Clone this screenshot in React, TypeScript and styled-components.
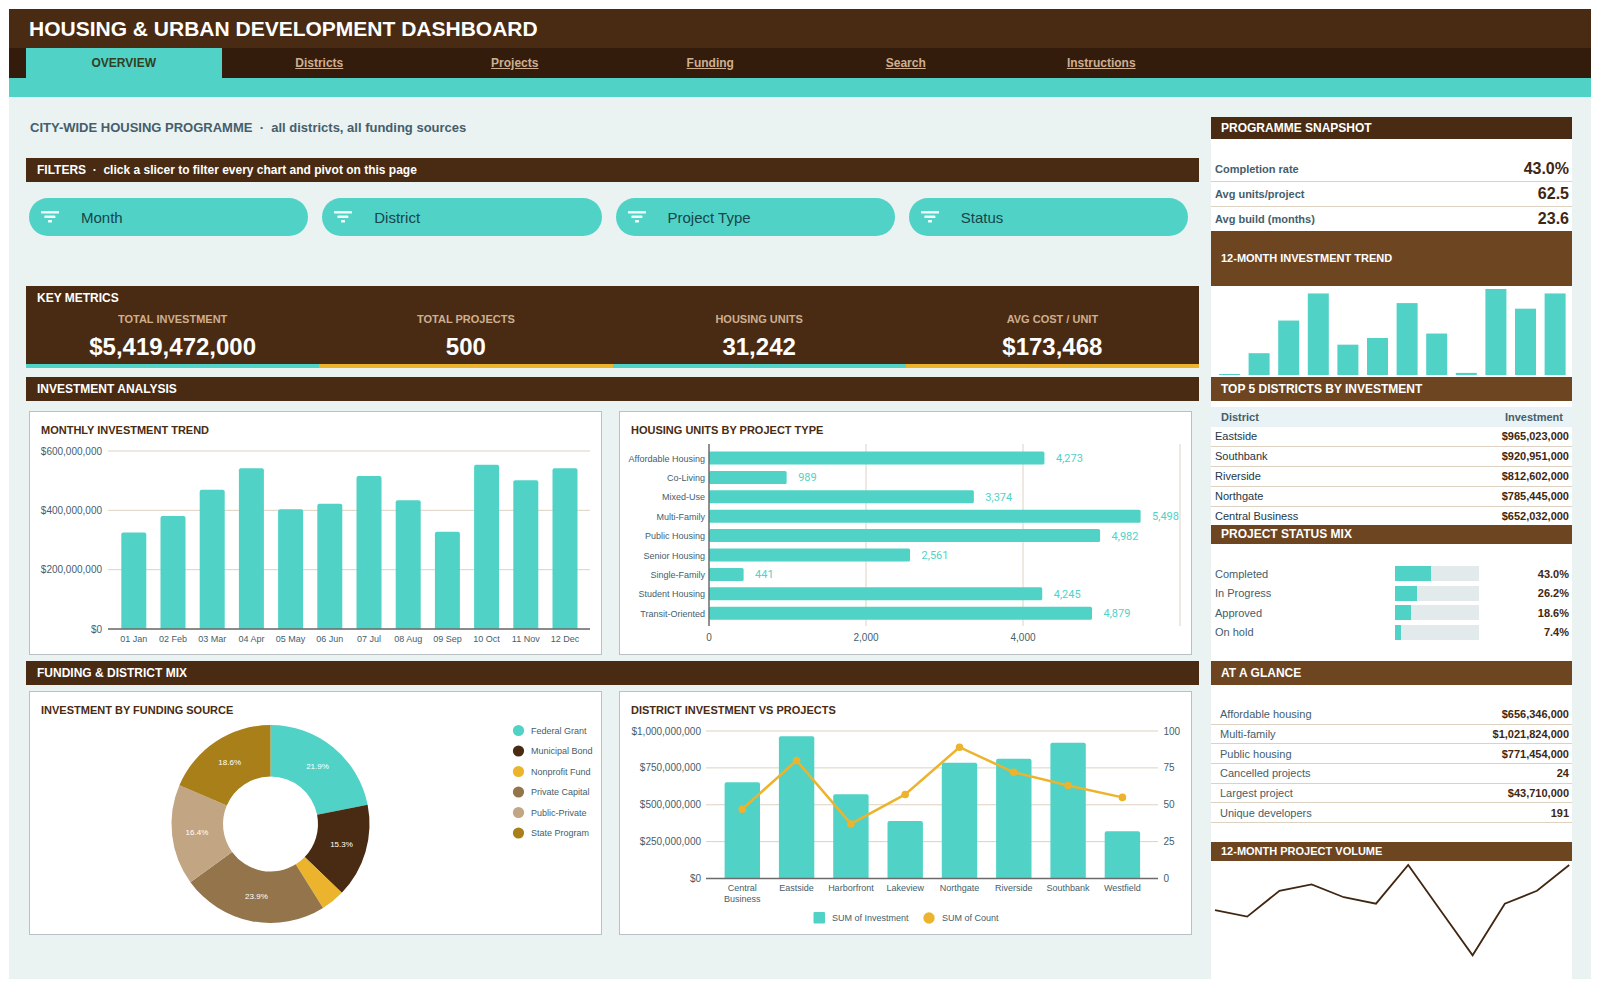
import styled, { createGlobalStyle } from 'styled-components';

const colors = {
  brown: '#482b12',
  darkBrown: '#331c0b',
  midBrown: '#6d4521',
  teal: '#50d2c6',
  gold: '#ecb32d',
  tan: '#cfae90',
  slate: '#455e6b',
  ink: '#233746',
  surface: '#ebf2f2',
  grid: '#ddd2c2',
  axis: '#6b6b6b',
};

const GlobalStyle = createGlobalStyle`
  * {
    box-sizing: border-box;
  }

  body {
    margin: 0;
    background: #ffffff;
    color: ${colors.brown};
    font-family: 'Liberation Sans', Arial, sans-serif;
    font-size: 11px;
  }
`;

const Page = styled.div`
  display: flex;
  flex-direction: column;
  min-height: 100vh;
  padding: 9px;
`;

const Header = styled.header`
  background: ${colors.brown};
`;

const PageTitle = styled.h1`
  margin: 0;
  padding: 0 20px;
  color: #ffffff;
  font-size: 21px;
  font-weight: 700;
  line-height: 39px;
`;

const Nav = styled.nav`
  display: grid;
  grid-template-columns: repeat(6, 1fr);
  padding: 0 392px 0 17px;
  background: ${colors.darkBrown};
`;

const NavLink = styled.a<{ $active?: boolean }>`
  background: ${({ $active }) => ($active ? colors.teal : 'transparent')};
  color: ${({ $active }) => ($active ? '#31401f' : colors.tan)};
  font-size: 12px;
  font-weight: 700;
  line-height: 30px;
  text-align: center;
  text-decoration: ${({ $active }) => ($active ? 'none' : 'underline')};
`;

const Stripe = styled.div`
  height: 19px;
  background: ${colors.teal};
`;

const Body = styled.div`
  display: grid;
  flex: 1;
  grid-template-columns: minmax(0, 1fr) 361px;
  gap: 12px;
  padding: 20px 19px 0 17px;
  background: ${colors.surface};
`;

const Main = styled.main`
  padding-bottom: 38px;
`;

const Subtitle = styled.p`
  margin: 0 0 19px;
  padding-left: 4px;
  color: ${colors.slate};
  font-size: 13px;
  font-weight: 700;
  line-height: 22px;
  white-space: pre;
`;

const SectionBar = styled.h2`
  margin: 0;
  padding: 0 11px;
  background: ${colors.brown};
  color: #ffffff;
  font-size: 12px;
  font-weight: 700;
  line-height: 24px;
  white-space: pre;
`;

const Slicers = styled.div`
  display: grid;
  grid-template-columns: repeat(4, 1fr);
  gap: 14px;
  margin: 16px 11px 50px 3px;
`;

const Slicer = styled.button`
  display: flex;
  align-items: center;
  gap: 22px;
  height: 38px;
  padding: 0 12px;
  border: 0;
  border-radius: 19px;
  background: ${colors.teal};
  color: #17454b;
  font-family: inherit;
  font-size: 15px;
  cursor: pointer;
`;

const Metrics = styled.section`
  margin-bottom: 9px;
  background: ${colors.brown};
`;

const MetricGrid = styled.div`
  display: grid;
  grid-template-columns: repeat(4, 1fr);
`;

const Metric = styled.div<{ $accent: string }>`
  padding-top: 2px;
  border-bottom: 4px solid ${({ $accent }) => $accent};
  text-align: center;
`;

const MetricLabel = styled.div`
  color: ${colors.tan};
  font-size: 11px;
  font-weight: 700;
  line-height: 14px;
`;

const MetricValue = styled.div`
  padding: 7px 0 3px;
  color: #ffffff;
  font-size: 24px;
  font-weight: 700;
  line-height: 28px;
`;

const Cards = styled.div<{ $top: number }>`
  display: grid;
  grid-template-columns: repeat(2, minmax(0, 1fr));
  gap: 17px;
  margin: ${({ $top }) => $top}px 7px 6px 3px;
`;

const Card = styled.section`
  border: 1px solid #b9c1c4;
  background: #ffffff;
`;

const CardTitle = styled.h3`
  margin: 0;
  padding: 11px 11px 0;
  font-size: 11px;
  font-weight: 700;
  line-height: 14px;
`;

const Chart = styled.svg`
  display: block;
  width: 100%;
  font-family: 'Liberation Sans', Arial, sans-serif;
`;

const AxisText = styled.text<{ $small?: boolean }>`
  fill: ${colors.slate};
  font-size: ${({ $small }) => ($small ? 9 : 10)}px;
  dominant-baseline: central;
`;

const BarValue = styled.text`
  fill: ${colors.teal};
  font-family: Roboto, sans-serif;
  font-size: 11px;
  dominant-baseline: central;
`;

const SliceText = styled.text`
  fill: #ffffff;
  font-size: 8px;
  text-anchor: middle;
  dominant-baseline: central;
`;

const Sidebar = styled.aside`
  background: #ffffff;
`;

const SideBar = styled.h2<{ $height: number; $dark?: boolean; $small?: boolean }>`
  margin: 0;
  padding: 0 10px;
  background: ${({ $dark }) => ($dark ? colors.brown : colors.midBrown)};
  color: #ffffff;
  font-size: ${({ $small }) => ($small ? 11 : 12)}px;
  font-weight: 700;
  line-height: ${({ $height }) => $height}px;
`;

const Table = styled.table<{ $height: number; $top: number; $bottom?: number }>`
  width: 100%;
  height: ${({ $height }) => $height}px;
  margin: ${({ $top, $bottom = 0 }) => `${$top}px 0 ${$bottom}px`};
  border-spacing: 0;
  font-size: 11px;
`;

const HeadCell = styled.th`
  height: 20px;
  padding: 0 9px 0 10px;
  background: #e9f2f5;
  color: ${colors.slate};
  text-align: left;

  &:last-child {
    text-align: right;
  }
`;

const LabelCell = styled.th<{ $bold?: boolean; $indent?: boolean; $color?: string; $line?: boolean }>`
  width: 51%;
  padding: 0 0 0 ${({ $indent }) => ($indent ? 9 : 4)}px;
  border-bottom: ${({ $line }) => ($line ? `1px solid ${colors.grid}` : '0')};
  color: ${({ $color }) => $color ?? colors.slate};
  font-weight: ${({ $bold }) => ($bold ? 700 : 400)};
  text-align: left;
`;

const ValueCell = styled.td<{ $large?: boolean; $line?: boolean }>`
  padding: 0 3px 0 0;
  border-bottom: ${({ $line }) => ($line ? `1px solid ${colors.grid}` : '0')};
  color: #402712;
  font-size: ${({ $large }) => ($large ? 16 : 11)}px;
  font-weight: 700;
  text-align: right;
`;

const TrackCell = styled.td`
  width: 84px;
  padding: 0;
`;

const Track = styled.div`
  height: 15px;
  background: #e3eaec;
`;

const Fill = styled.div`
  height: 100%;
  background: ${colors.teal};
`;

const tabs = ['OVERVIEW', 'Districts', 'Projects', 'Funding', 'Search', 'Instructions'];

const slicers = ['Month', 'District', 'Project Type', 'Status'];

const metrics = [
  { label: 'TOTAL INVESTMENT', value: '$5,419,472,000' },
  { label: 'TOTAL PROJECTS', value: '500' },
  { label: 'HOUSING UNITS', value: '31,242' },
  { label: 'AVG COST / UNIT', value: '$173,468' },
];

// investment in millions
const monthly = [
  { month: '01 Jan', value: 325 },
  { month: '02 Feb', value: 381 },
  { month: '03 Mar', value: 469 },
  { month: '04 Apr', value: 542 },
  { month: '05 May', value: 404 },
  { month: '06 Jun', value: 422 },
  { month: '07 Jul', value: 516 },
  { month: '08 Aug', value: 434 },
  { month: '09 Sep', value: 328 },
  { month: '10 Oct', value: 554 },
  { month: '11 Nov', value: 501 },
  { month: '12 Dec', value: 542 },
];

const unitsByType = [
  { type: 'Affordable Housing', units: 4273 },
  { type: 'Co-Living', units: 989 },
  { type: 'Mixed-Use', units: 3374 },
  { type: 'Multi-Family', units: 5498 },
  { type: 'Public Housing', units: 4982 },
  { type: 'Senior Housing', units: 2561 },
  { type: 'Single-Family', units: 441 },
  { type: 'Student Housing', units: 4245 },
  { type: 'Transit-Oriented', units: 4879 },
];

const funding = [
  { source: 'Federal Grant', share: 21.9, color: colors.teal },
  { source: 'Municipal Bond', share: 15.3, color: colors.brown },
  { source: 'Nonprofit Fund', share: 3.9, color: colors.gold },
  { source: 'Private Capital', share: 23.9, color: '#94744a' },
  { source: 'Public-Private', share: 16.4, color: '#c2a583' },
  { source: 'State Program', share: 18.6, color: '#a87f18' },
];

const districts = [
  { name: ['Central', 'Business'], value: 652, count: 47 },
  { name: ['Eastside'], value: 965, count: 80 },
  { name: ['Harborfront'], value: 572, count: 37 },
  { name: ['Lakeview'], value: 389, count: 57 },
  { name: ['Northgate'], value: 785, count: 89 },
  { name: ['Riverside'], value: 812, count: 72 },
  { name: ['Southbank'], value: 921, count: 63 },
  { name: ['Westfield'], value: 321, count: 55 },
];

const snapshot = [
  ['Completion rate', '43.0%'],
  ['Avg units/project', '62.5'],
  ['Avg build (months)', '23.6'],
];

const topDistricts = [
  ['Eastside', '$965,023,000'],
  ['Southbank', '$920,951,000'],
  ['Riverside', '$812,602,000'],
  ['Northgate', '$785,445,000'],
  ['Central Business', '$652,032,000'],
];

const statusMix = [
  { status: 'Completed', share: 43.0 },
  { status: 'In Progress', share: 26.2 },
  { status: 'Approved', share: 18.6 },
  { status: 'On hold', share: 7.4 },
];

const glance = [
  ['Affordable housing', '$656,346,000'],
  ['Multi-family', '$1,021,824,000'],
  ['Public housing', '$771,454,000'],
  ['Cancelled projects', '24'],
  ['Largest project', '$43,710,000'],
  ['Unique developers', '191'],
];

const volume = [41, 40, 44, 45, 43, 42, 48, 41, 34, 42, 44, 48];

// bar with only its top corners rounded
const roundedTop = (x: number, y: number, width: number, bottom: number) =>
  `M${x} ${bottom}V${y + 2}q0 -2 2 -2h${width - 4}q2 0 2 2V${bottom}z`;

const FilterIcon = () => (
  <svg width="18" height="12" viewBox="0 0 18 12" fill="#eefcfa" aria-hidden="true">
    <rect x="0" y="0" width="18" height="2.5" rx="0.5" />
    <rect x="3.4" y="4.5" width="11" height="2.5" rx="0.5" />
    <rect x="7" y="9" width="4" height="2.5" rx="0.5" />
  </svg>
);

const MonthlyChart = () => {
  const base = 192;
  const scale = 178 / 600;
  const step = 39.2;

  return (
    <Chart viewBox="0 0 571 217" role="img" aria-label="Monthly investment trend">
      {[600, 400, 200, 0].map(tick => (
        <g key={tick}>
          <line
            x1="78"
            x2="560"
            y1={base - tick * scale}
            y2={base - tick * scale}
            stroke={colors.grid}
          />
          <AxisText x="72" y={base - tick * scale} textAnchor="end">
            {tick ? `$${tick},000,000` : '$0'}
          </AxisText>
        </g>
      ))}
      {monthly.map(({ month, value }, i) => (
        <g key={month}>
          <path
            d={roundedTop(91.3 + i * step, base - value * scale, 25, base)}
            fill={colors.teal}
          />
          <AxisText $small x={103.8 + i * step} y="202" textAnchor="middle">
            {month}
          </AxisText>
        </g>
      ))}
      <line x1="78" x2="560" y1={base} y2={base} stroke={colors.axis} strokeWidth="1.5" />
    </Chart>
  );
};

const UnitsChart = () => {
  const left = 89;
  const scale = 157 / 2000;
  const step = 19.4;

  return (
    <Chart viewBox="0 0 571 217" role="img" aria-label="Housing units by project type">
      {[2000, 4000, 6000].map(tick => (
        <line
          key={tick}
          x1={left + tick * scale}
          x2={left + tick * scale}
          y1="7"
          y2="189"
          stroke={colors.grid}
        />
      ))}
      {unitsByType.map(({ type, units }, i) => (
        <g key={type}>
          <AxisText $small x="85" y={21.5 + i * step} textAnchor="end">
            {type}
          </AxisText>
          <rect
            x={left}
            y={14.5 + i * step}
            width={units * scale}
            height="13"
            rx="1.5"
            fill={colors.teal}
          />
          <BarValue x={left + units * scale + 11.5} y={21.5 + i * step}>
            {units.toLocaleString('en-US')}
          </BarValue>
        </g>
      ))}
      <line x1={left} x2={left} y1="7" y2="189" stroke={colors.axis} strokeWidth="1.5" />
      {[0, 2000, 4000].map(tick => (
        <AxisText key={tick} x={left + tick * scale} y="200" textAnchor="middle">
          {tick.toLocaleString('en-US')}
        </AxisText>
      ))}
    </Chart>
  );
};

const FundingChart = () => {
  const cx = 240.5;
  const cy = 107;
  const outer = 99;
  const inner = 47.5;
  const total = funding.reduce((sum, item) => sum + item.share, 0);

  const point = (radius: number, share: number) => {
    const angle = (share / total) * Math.PI * 2;
    return [cx + radius * Math.sin(angle), cy - radius * Math.cos(angle)];
  };

  return (
    <Chart viewBox="0 0 571 217" role="img" aria-label="Investment by funding source">
      {funding.map(({ source, share, color }, i) => {
        const start = funding.slice(0, i).reduce((sum, item) => sum + item.share, 0);
        const end = start + share;
        const label = point(74, start + share / 2);
        return (
          <g key={source}>
            <path
              d={`M${point(outer, start)}A${outer} ${outer} 0 0 1 ${point(outer, end)}L${point(inner, end)}A${inner} ${inner} 0 0 0 ${point(inner, start)}z`}
              fill={color}
            />
            {share > 5 && (
              <SliceText x={label[0]} y={label[1]}>
                {share}%
              </SliceText>
            )}
            <circle cx="488.5" cy={13.5 + i * 20.5} r="5.6" fill={color} />
            <AxisText $small x="501" y={13.5 + i * 20.5}>
              {source}
            </AxisText>
          </g>
        );
      })}
    </Chart>
  );
};

const DistrictChart = () => {
  const base = 161.5;
  const scale = 147.5 / 100;
  const step = 54.3;
  const center = (i: number) => 122.3 + i * step;

  return (
    <Chart viewBox="0 0 571 217" role="img" aria-label="District investment vs projects">
      {[100, 75, 50, 25, 0].map(tick => (
        <g key={tick}>
          <line
            x1="86"
            x2="538"
            y1={base - tick * scale}
            y2={base - tick * scale}
            stroke={colors.grid}
          />
          <AxisText x="81" y={base - tick * scale} textAnchor="end">
            {tick ? `$${(tick * 10000000).toLocaleString('en-US')}` : '$0'}
          </AxisText>
          <AxisText x="543.5" y={base - tick * scale}>
            {tick}
          </AxisText>
        </g>
      ))}
      {districts.map(({ name, value }, i) => (
        <g key={name[0]}>
          <path
            d={roundedTop(center(i) - 17.7, base - (value / 10) * scale, 35.4, base)}
            fill={colors.teal}
          />
          {name.map((line, n) => (
            <AxisText $small key={line} x={center(i)} y={171 + n * 11} textAnchor="middle">
              {line}
            </AxisText>
          ))}
        </g>
      ))}
      <line x1="86" x2="538" y1={base} y2={base} stroke={colors.axis} strokeWidth="1.5" />
      <polyline
        points={districts.map(({ count }, i) => `${center(i)},${base - count * scale}`).join(' ')}
        fill="none"
        stroke={colors.gold}
        strokeWidth="2.5"
      />
      {districts.map(({ name, count }, i) => (
        <circle key={name[0]} cx={center(i)} cy={base - count * scale} r="3.8" fill={colors.gold} />
      ))}
      <rect x="193.5" y="195" width="11.5" height="11.5" rx="1" fill={colors.teal} />
      <AxisText $small x="212" y="201">
        SUM of Investment
      </AxisText>
      <circle cx="309" cy="201" r="5.7" fill={colors.gold} />
      <AxisText $small x="322" y="201">
        SUM of Count
      </AxisText>
    </Chart>
  );
};

const TrendSpark = () => {
  const values = monthly.map(item => item.value);
  const min = Math.min(...values);
  const range = Math.max(...values) - min;

  return (
    <Chart viewBox="0 0 361 91" role="img" aria-label="12-month investment trend">
      {monthly.map(({ month, value }, i) => {
        const height = 1 + ((value - min) / range) * 85;
        return (
          <rect
            key={month}
            x={8 + i * 29.6}
            y={89 - height}
            width="21"
            height={height}
            fill={colors.teal}
          />
        );
      })}
    </Chart>
  );
};

const VolumeSpark = () => (
  <Chart viewBox="0 0 361 118" role="img" aria-label="12-month project volume">
    <polyline
      points={volume.map((count, i) => `${4 + i * 32.2},${4 + (48 - count) * 6.45}`).join(' ')}
      fill="none"
      stroke="#402712"
      strokeWidth="1.8"
    />
  </Chart>
);

export default function App() {
  return (
    <>
      <GlobalStyle />
      <Page>
        <Header>
          <PageTitle>HOUSING &amp; URBAN DEVELOPMENT DASHBOARD</PageTitle>
          <Nav>
            {tabs.map((tab, i) => (
              <NavLink key={tab} href={`#${tab.toLowerCase()}`} $active={i === 0}>
                {tab}
              </NavLink>
            ))}
          </Nav>
          <Stripe />
        </Header>

        <Body>
          <Main>
            <Subtitle>{'CITY-WIDE HOUSING PROGRAMME  ·  all districts, all funding sources'}</Subtitle>

            <SectionBar>{'FILTERS  ·  click a slicer to filter every chart and pivot on this page'}</SectionBar>
            <Slicers>
              {slicers.map(name => (
                <Slicer key={name} type="button">
                  <FilterIcon />
                  {name}
                </Slicer>
              ))}
            </Slicers>

            <Metrics>
              <SectionBar>KEY METRICS</SectionBar>
              <MetricGrid>
                {metrics.map(({ label, value }, i) => (
                  <Metric key={label} $accent={i % 2 ? colors.gold : colors.teal}>
                    <MetricLabel>{label}</MetricLabel>
                    <MetricValue>{value}</MetricValue>
                  </Metric>
                ))}
              </MetricGrid>
            </Metrics>

            <SectionBar>INVESTMENT ANALYSIS</SectionBar>
            <Cards $top={10}>
              <Card>
                <CardTitle>MONTHLY INVESTMENT TREND</CardTitle>
                <MonthlyChart />
              </Card>
              <Card>
                <CardTitle>HOUSING UNITS BY PROJECT TYPE</CardTitle>
                <UnitsChart />
              </Card>
            </Cards>

            <SectionBar>FUNDING &amp; DISTRICT MIX</SectionBar>
            <Cards $top={6}>
              <Card>
                <CardTitle>INVESTMENT BY FUNDING SOURCE</CardTitle>
                <FundingChart />
              </Card>
              <Card>
                <CardTitle>DISTRICT INVESTMENT VS PROJECTS</CardTitle>
                <DistrictChart />
              </Card>
            </Cards>
          </Main>

          <Sidebar>
            <SideBar $dark $height={22}>PROGRAMME SNAPSHOT</SideBar>
            <Table $height={74} $top={18}>
              <tbody>
                {snapshot.map(([label, value], i) => (
                  <tr key={label}>
                    <LabelCell scope="row" $bold $line={i < 2}>{label}</LabelCell>
                    <ValueCell $large $line={i < 2}>{value}</ValueCell>
                  </tr>
                ))}
              </tbody>
            </Table>

            <SideBar $small $height={55}>12-MONTH INVESTMENT TREND</SideBar>
            <TrendSpark />

            <SideBar $height={24}>TOP 5 DISTRICTS BY INVESTMENT</SideBar>
            <Table $height={118} $top={6}>
              <thead>
                <tr>
                  <HeadCell scope="col">District</HeadCell>
                  <HeadCell scope="col">Investment</HeadCell>
                </tr>
              </thead>
              <tbody>
                {topDistricts.map(([label, value], i) => (
                  <tr key={label}>
                    <LabelCell scope="row" $color={colors.ink} $line={i < 4}>{label}</LabelCell>
                    <ValueCell $line={i < 4}>{value}</ValueCell>
                  </tr>
                ))}
              </tbody>
            </Table>

            <SideBar $height={19}>PROJECT STATUS MIX</SideBar>
            <Table $height={78} $top={20} $bottom={19}>
              <tbody>
                {statusMix.map(({ status, share }) => (
                  <tr key={status}>
                    <LabelCell scope="row">{status}</LabelCell>
                    <TrackCell>
                      <Track>
                        <Fill style={{ width: `${share}%` }} />
                      </Track>
                    </TrackCell>
                    <ValueCell>{share.toFixed(1)}%</ValueCell>
                  </tr>
                ))}
              </tbody>
            </Table>

            <SideBar $height={24}>AT A GLANCE</SideBar>
            <Table $height={118} $top={20} $bottom={19}>
              <tbody>
                {glance.map(([label, value]) => (
                  <tr key={label}>
                    <LabelCell scope="row" $indent $line>{label}</LabelCell>
                    <ValueCell $line>{value}</ValueCell>
                  </tr>
                ))}
              </tbody>
            </Table>

            <SideBar $small $height={19}>12-MONTH PROJECT VOLUME</SideBar>
            <VolumeSpark />
          </Sidebar>
        </Body>
      </Page>
    </>
  );
}
